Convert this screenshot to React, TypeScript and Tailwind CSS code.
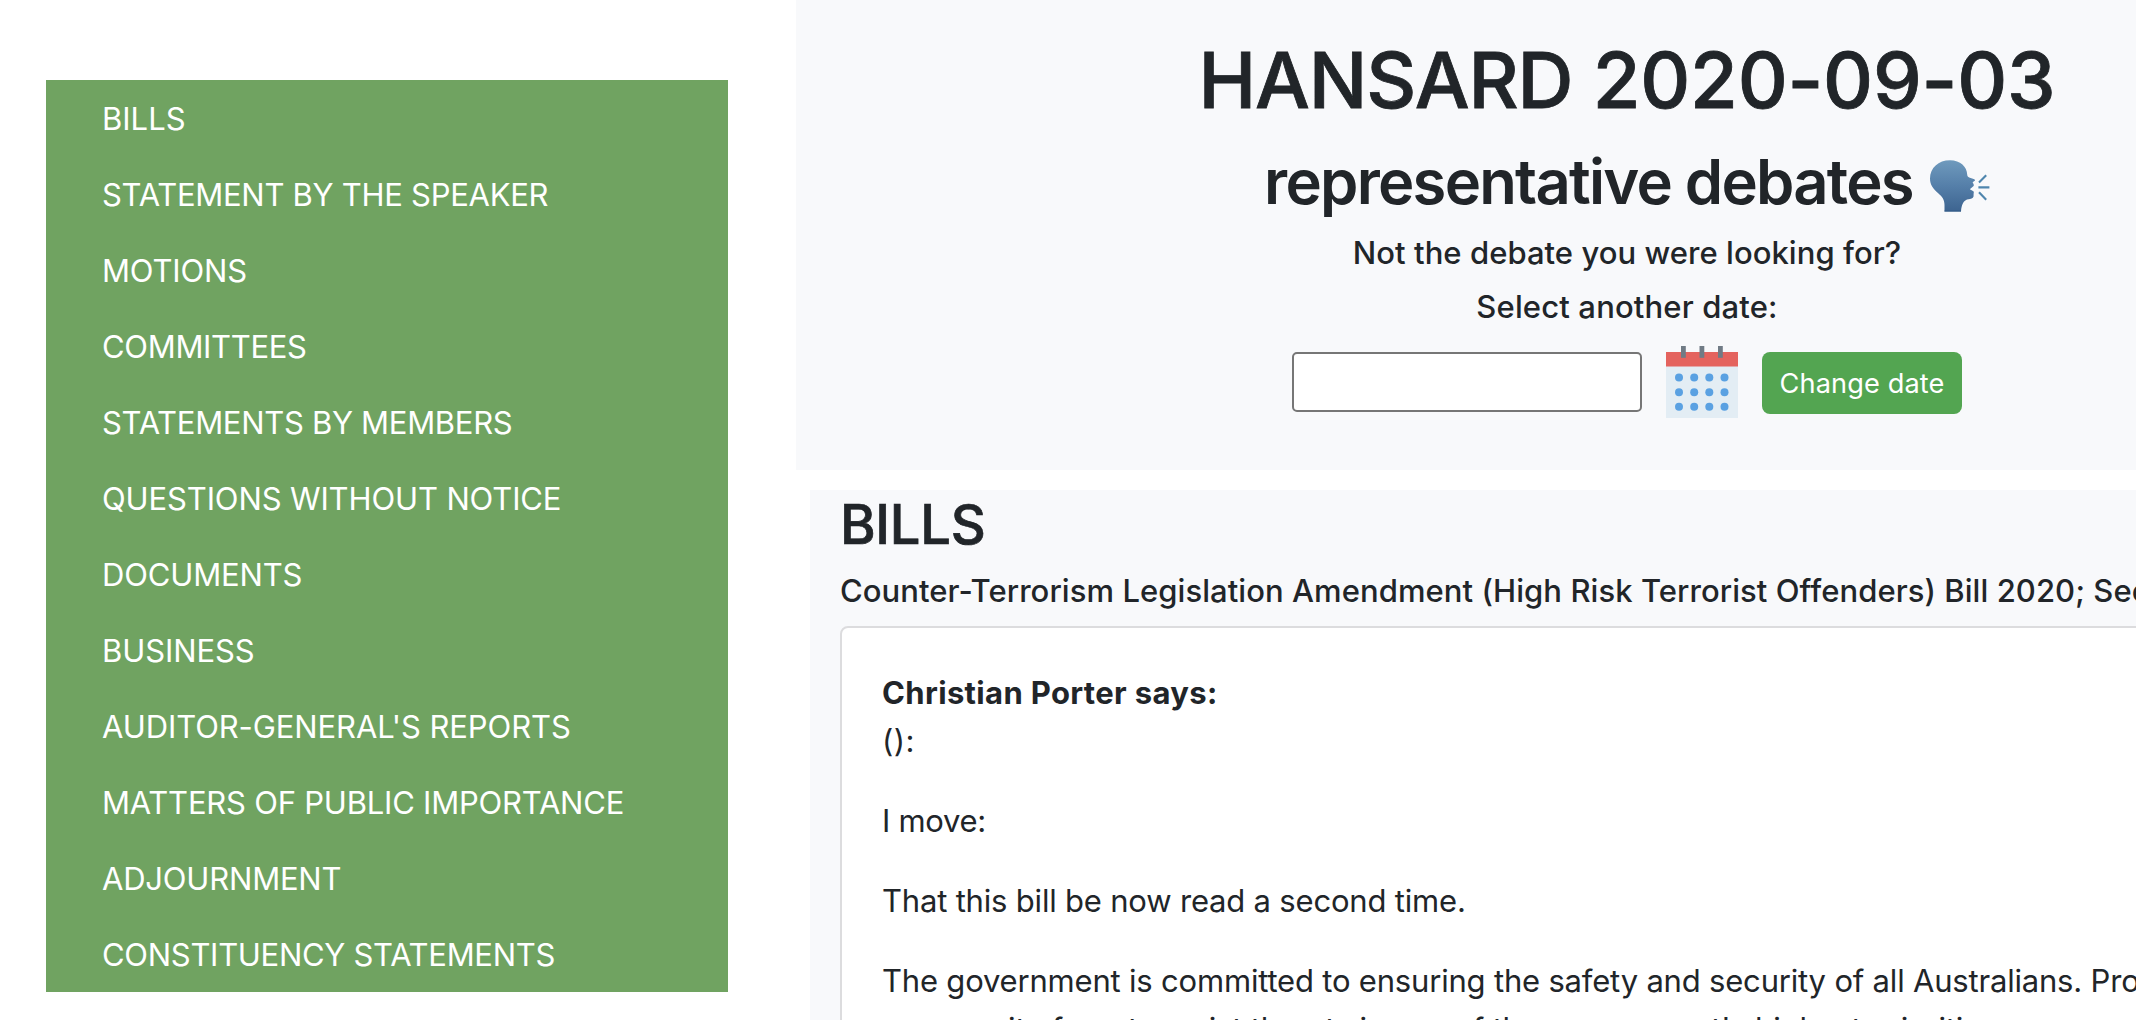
const sections = [
  { title: "BILLS", tracking: "tracking-[0px]" },
  { title: "STATEMENT BY THE SPEAKER", tracking: "tracking-[-0.28px]" },
  { title: "MOTIONS", tracking: "tracking-[-0.15px]" },
  { title: "COMMITTEES", tracking: "tracking-[-0.32px]" },
  { title: "STATEMENTS BY MEMBERS", tracking: "tracking-[-0.3px]" },
  { title: "QUESTIONS WITHOUT NOTICE", tracking: "tracking-[-0.13px]" },
  { title: "DOCUMENTS", tracking: "tracking-[-0.15px]" },
  { title: "BUSINESS", tracking: "tracking-[-0.1px]" },
  { title: "AUDITOR-GENERAL'S REPORTS", tracking: "tracking-[-0.1px]" },
  { title: "MATTERS OF PUBLIC IMPORTANCE", tracking: "tracking-[-0.22px]" },
  { title: "ADJOURNMENT", tracking: "tracking-[-0.2px]" },
  { title: "CONSTITUENCY STATEMENTS", tracking: "tracking-[-0.3px]" },
];

function SpeakingHead() {
  return (
    <svg className="h-[52px] w-[60px] shrink-0" viewBox="0 0 60 52" fill="none">
      <defs>
        <linearGradient id="head" x1="0" y1="0" x2="0" y2="1">
          <stop offset="0" stopColor="#6f9abd" />
          <stop offset="0.5" stopColor="#557fa9" />
          <stop offset="1" stopColor="#3d6490" />
        </linearGradient>
      </defs>
      <path
        d="M14.5 51.5V45C14.5 39.5 12 36.5 8.5 33.5C3 29 0 24.5 0 18.5C0 8 8.5 0.3 20 0.3C30.5 0.3 37 7 37.2 14.5C37.4 16.6 38 17 39.2 17.4L44.3 19.2C45.2 19.6 45.2 20.6 44.4 21.1L42.6 22.2C43.6 24 44.2 25 43.6 26L39.8 29.2L43.4 31.2C44.3 32 43.5 33.2 43.6 34.5C44 37.5 42.4 38.6 40 38.9L37 39.5C33.5 41 31.5 44.5 31 51.5Z"
        fill="url(#head)"
      />
      <path d="M14.5 51H31" stroke="#315a86" />
      <path d="M49 22.4L56.2 15.2M48.4 27.4H59.4M49 32.2L56.2 39.8" stroke="#4f86ae" strokeWidth="2.1" />
    </svg>
  );
}

function CalendarIcon() {
  return (
    <svg className="h-[72px] w-[72px] shrink-0" viewBox="0 0 72 72">
      <rect y="6" width="72" height="66" fill="#e3edf4" />
      <rect y="6" width="72" height="14.5" fill="#e4635e" />
      {[15, 33.5, 52].map((x) => (
        <rect key={x} x={x} width="4.8" height="11.8" fill="#707b85" />
      ))}
      {[31.5, 46.2, 60.8].map((y) =>
        [13, 28.2, 43.3, 58.5].map((x) => <circle key={`${x}-${y}`} cx={x} cy={y} r="4" fill="#5aa1e2" />),
      )}
    </svg>
  );
}

export default function App() {
  return (
    <div className="flex h-[1020px] w-[2136px] overflow-hidden bg-white font-['Inter',sans-serif] text-[31px] text-[#212529]">
      <nav className="mt-20 ml-[46px] h-[912px] w-[682px] shrink-0 bg-[#70a361] pl-14 text-white">
        <ul>
          {sections.map((s) => (
            <li key={s.title} className={`h-[76px] leading-[77px] whitespace-nowrap ${s.tracking}`}>
              {s.title}
            </li>
          ))}
        </ul>
      </nav>

      <div className="ml-[68px] w-[1664px] shrink-0">
        <header className="flex h-[470px] flex-col items-center bg-[#f8f9fb] pt-8 pr-[202px] pl-[200px]">
          <h1 className="h-28 text-[77.5px] leading-[96px] font-medium tracking-[-0.2px] whitespace-nowrap [-webkit-text-stroke:0.8px_#212529]">
            <span className="tracking-[-1.2px]">HANSARD</span> 2020-09-03
          </h1>
          <div className="flex h-[90px] items-start gap-[17px]">
            <h2 className="text-[61.5px] leading-[75px] font-semibold tracking-[-1.75px] whitespace-nowrap">
              representative debates
            </h2>
            <div className="pt-4">
              <SpeakingHead />
            </div>
          </div>
          <h5 className="h-[54px] leading-[38px] font-medium tracking-[0.05px]">Not the debate you were looking for?</h5>
          <h5 className="h-[57px] leading-[38px] font-medium tracking-[0.15px]">Select another date:</h5>
          <form className="flex items-start" onSubmit={(e) => e.preventDefault()}>
            <input type="text" className="mt-[7px] h-[60px] w-[350px] rounded-[5px] border-2 border-[#767676] bg-white px-3" />
            <div className="mr-6 ml-6 pt-px">
              <CalendarIcon />
            </div>
            <button
              type="submit"
              className="mt-[7px] h-[62px] w-[200px] rounded-lg bg-[#53a551] pt-0.5 text-[27.2px] leading-[60px] tracking-[0.1px] whitespace-nowrap text-white"
            >
              Change date
            </button>
          </form>
        </header>

        <main className="mt-5 ml-3.5 h-[530px] bg-[#f8f9fb] pt-px pl-[30px]">
          <h2 className="h-[81px] text-[54.3px] leading-[67px] font-medium tracking-[-0.3px] [-webkit-text-stroke:0.7px_#212529]">BILLS</h2>
          <h5 className="h-[54px] leading-[38px] font-medium tracking-[0.064px] whitespace-nowrap">
            Counter-Terrorism Legislation Amendment (High Risk Terrorist Offenders) Bill 2020; Second Reading
          </h5>
          <article className="h-[600px] w-[1400px] rounded-lg border-2 border-[#dcdcde] bg-white pt-[41px] pl-10 leading-[48px] tracking-[-0.19px] whitespace-nowrap">
            <h6 className="font-bold tracking-[0.35px]">Christian Porter says:</h6>
            <p className="mb-8 tracking-[0.4px]">():</p>
            <p className="mb-8 tracking-[-0.3px]">I move:</p>
            <p className="mb-8">That this bill be now read a second time.</p>
            <p>
              The government is committed to ensuring the safety and security of all Australians. Protecting our
              <br />
              community from terrorist threats is one of the government's highest priorities.
            </p>
          </article>
        </main>
      </div>
    </div>
  );
}
